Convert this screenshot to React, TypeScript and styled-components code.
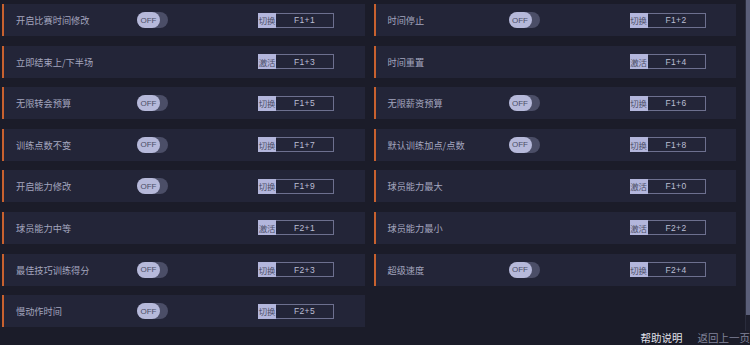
import styled, { createGlobalStyle } from "styled-components";

const GlobalStyle = createGlobalStyle`
  html, body {
    margin: 0;
    padding: 0;
    background: #1b1c29;
  }
  * {
    box-sizing: border-box;
  }
`;

const Page = styled.div`
  width: 750px;
  height: 345px;
  overflow: hidden;
  background: #1b1c29;
  display: flex;
  flex-direction: column;
  font-family: "Noto Sans CJK SC", "Noto Sans", sans-serif;
`;

const Body = styled.div`
  display: flex;
  height: 331px;
  flex-shrink: 0;
`;

const List = styled.div`
  flex: 1;
  display: grid;
  grid-template-columns: 1fr 1fr;
  grid-auto-rows: 32px;
  column-gap: 9px;
  row-gap: 9.6px;
  padding: 4px 9px 0 2px;
  align-content: start;
`;

const ScrollTrack = styled.div`
  width: 5px;
  height: 100%;
  border-left: 1px solid #2a2c3c;
  background: #1e1f2d;
`;

const ScrollThumb = styled.div`
  height: 315px;
  background: #5a5e78;
`;

const Card = styled.div`
  display: grid;
  grid-template-columns: 121px 121px auto;
  align-items: center;
  background: #232538;
  border-left: 2px solid #c8612f;
  padding-left: 12px;
`;

const Label = styled.span`
  font-size: 9.2px;
  color: #a3a6bf;
  white-space: nowrap;
`;

const Toggle = styled.div`
  width: 31px;
  height: 16px;
  border-radius: 8px;
  background: #4b4e67;
  display: flex;
  align-items: center;
`;

const Knob = styled.div`
  width: 23px;
  height: 16px;
  border-radius: 8px;
  background: #b6b9da;
  display: flex;
  align-items: center;
  justify-content: center;
  font-family: "Liberation Sans", "Noto Sans", sans-serif;
  font-size: 8px;
  color: #4a4d66;
`;

const Hotkey = styled.div`
  display: flex;
  height: 15px;
  width: 76px;
`;

const Tag = styled.span`
  width: 18px;
  background: #b3b6dc;
  color: #4c4f69;
  font-size: 8.4px;
  display: flex;
  align-items: center;
  justify-content: center;
  white-space: nowrap;
`;

const Key = styled.span`
  flex: 1;
  border: 1px solid #6d708f;
  border-left: none;
  color: #bcbfd4;
  font-family: "Liberation Sans", "Noto Sans", sans-serif;
  font-size: 8.5px;
  display: flex;
  align-items: center;
  justify-content: center;
  letter-spacing: 0.4px;
`;

const Footer = styled.div`
  display: flex;
  justify-content: flex-end;
  gap: 15px;
  height: 14px;
  line-height: 14px;
  font-size: 10.5px;
  white-space: nowrap;
`;

const FooterLink = styled.span<{ $active?: boolean }>`
  color: ${(p) => (p.$active ? "#e2e3ec" : "#80839a")};
`;

type Row = { label: string; toggle: boolean; mode: string; key: string };

const left: Row[] = [
  { label: "开启比赛时间修改", toggle: true, mode: "切换", key: "F1+1" },
  { label: "立即结束上/下半场", toggle: false, mode: "激活", key: "F1+3" },
  { label: "无限转会预算", toggle: true, mode: "切换", key: "F1+5" },
  { label: "训练点数不变", toggle: true, mode: "切换", key: "F1+7" },
  { label: "开启能力修改", toggle: true, mode: "切换", key: "F1+9" },
  { label: "球员能力中等", toggle: false, mode: "激活", key: "F2+1" },
  { label: "最佳技巧训练得分", toggle: true, mode: "切换", key: "F2+3" },
  { label: "慢动作时间", toggle: true, mode: "切换", key: "F2+5" },
];

const right: Row[] = [
  { label: "时间停止", toggle: true, mode: "切换", key: "F1+2" },
  { label: "时间重置", toggle: false, mode: "激活", key: "F1+4" },
  { label: "无限薪资预算", toggle: true, mode: "切换", key: "F1+6" },
  { label: "默认训练加点/点数", toggle: true, mode: "切换", key: "F1+8" },
  { label: "球员能力最大", toggle: false, mode: "激活", key: "F1+0" },
  { label: "球员能力最小", toggle: false, mode: "激活", key: "F2+2" },
  { label: "超级速度", toggle: true, mode: "切换", key: "F2+4" },
];

const rows: Row[] = [];
left.forEach((r, i) => {
  rows.push(r);
  if (right[i]) rows.push(right[i]);
});

function OptionCard({ row }: { row: Row }) {
  return (
    <Card>
      <Label>{row.label}</Label>
      {row.toggle ? (
        <Toggle>
          <Knob>OFF</Knob>
        </Toggle>
      ) : (
        <span />
      )}
      <Hotkey>
        <Tag>{row.mode}</Tag>
        <Key>{row.key}</Key>
      </Hotkey>
    </Card>
  );
}

export default function App() {
  return (
    <Page>
      <GlobalStyle />
      <Body>
        <List>
          {rows.map((r) => (
            <OptionCard key={r.label} row={r} />
          ))}
        </List>
        <ScrollTrack>
          <ScrollThumb />
        </ScrollTrack>
      </Body>
      <Footer>
        <FooterLink $active>帮助说明</FooterLink>
        <FooterLink>返回上一页</FooterLink>
      </Footer>
    </Page>
  );
}
